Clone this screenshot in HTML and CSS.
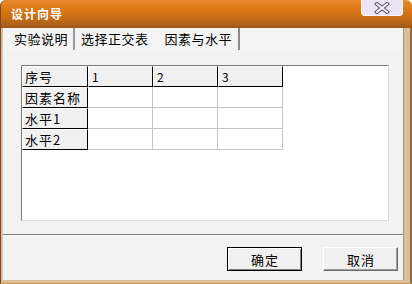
FILE: index.html
```html
<!DOCTYPE html>
<html>
	<head>
		<meta charset="UTF-8">
		<title>设计向导</title>
		<link rel="stylesheet" href="styles.css">
	</head>
	<body>
		<div class="window">
			<div class="titlebar">
				<span class="title">设计向导</span>
				<div class="close">
					<svg width="16" height="12" viewBox="0 0 16 12">
						<path d="M3 2 L13 10 M13 2 L3 10" stroke="#5a4a6a" stroke-width="4" stroke-linecap="square"/>
						<path d="M3 2 L13 10 M13 2 L3 10" stroke="#f4eefa" stroke-width="2" stroke-linecap="square"/>
					</svg>
				</div>
			</div>
			<div class="frame">
				<div class="body">
					<!--标签页-->
					<div class="tabs">
						<div class="tab first">实验说明</div>
						<div class="tab second">选择正交表</div>
						<div class="tab active">因素与水平</div>
					</div>
					<div class="panel">
						<div class="gridbox">
							<table class="grid">
								<tr>
									<th class="c0">序号</th>
									<th>1</th>
									<th>2</th>
									<th>3</th>
								</tr>
								<tr>
									<th class="c0">因素名称</th>
									<td></td><td></td><td></td>
								</tr>
								<tr>
									<th class="c0">水平1</th>
									<td></td><td></td><td></td>
								</tr>
								<tr>
									<th class="c0">水平2</th>
									<td></td><td></td><td></td>
								</tr>
							</table>
						</div>
					</div>
					<div class="buttons">
						<button class="btn default">确定</button>
						<button class="btn">取消</button>
					</div>
				</div>
			</div>
		</div>
	</body>
</html>
```

FILE: styles.css
```css
* {
	margin: 0;
	padding: 0;
	box-sizing: border-box;
}

body {
	width: 412px;
	height: 284px;
	overflow: hidden;
	background: #f2f2f2;
	font-family: "Noto Sans CJK SC", "Liberation Sans", sans-serif;
	font-size: 13px;
	color: #000;
}

.window {
	width: 412px;
	height: 284px;
	display: flex;
	flex-direction: column;
}

.titlebar {
	height: 28px;
	display: flex;
	align-items: flex-start;
	border-radius: 6px 6px 0 0;
	background: linear-gradient(#ec8a2c, #dc7612 35%, #c46a16 70%, #9c5a1a);
	border-left: 1px solid #7a4a18;
}

.title {
	color: #fff;
	font-weight: bold;
	font-size: 12px;
	letter-spacing: 1px;
	line-height: 16px;
	padding: 6px 0 0 10px;
}

.close {
	margin-left: auto;
	margin-right: 9px;
	width: 42px;
	height: 16px;
	background: #ece4f2;
	border: 1px solid #fbf8ff;
	border-top: none;
	border-radius: 0 0 4px 4px;
	display: flex;
	align-items: center;
	justify-content: center;
}

.frame {
	flex: 1;
	display: flex;
	background: #dcbf94;
	border-left: 1px solid #6a4a28;
	padding: 0 6px 3px 2px;
	border-right: 2px solid #8a6a48;
	border-bottom: 1px solid #c89a58;
}

.body {
	flex: 1;
	background: #f2f2f2;
	display: flex;
	flex-direction: column;
	border-right: 1px solid #a09488;
}

.tabs {
	height: 22px;
	display: flex;
	padding-left: 2px;
	background: #f4f4f4;
}

.tab {
	line-height: 22px;
	letter-spacing: 0.5px;
	white-space: nowrap;
}

.tab.first {
	padding: 0 5px 0 9px;
	border-right: 2px solid #9a9a9a;
}

.tab.second {
	padding: 0 7px 0 6px;
}

.tab.active {
	padding: 0 6px 0 9px;
	border-right: 2px solid #8a8a8a;
}

.panel {
	flex: 1;
	padding: 15px 0 0 18px;
	border-bottom: 1px solid #7c7c7c;
}

.gridbox {
	width: 368px;
	height: 156px;
	background: #fff;
	border-top: 1px solid #7a7a7a;
	border-left: 1px solid #7a7a7a;
	border-right: 1px solid #d8d8d8;
	border-bottom: 1px solid #e2e2e2;
}

.grid {
	border-collapse: separate;
	border-spacing: 0;
	font-size: 13px;
}

.grid th,
.grid td {
	height: 21px;
	width: 65px;
	padding: 0 3px;
	text-align: left;
	font-weight: normal;
	white-space: nowrap;
	line-height: 19px;
}

.grid th {
	background: #f0f0f0;
	border-top: 1px solid #fff;
	border-left: 1px solid #fff;
	border-right: 1px solid #000;
	border-bottom: 1px solid #000;
	font-size: 12px;
}

.grid th.c0 {
	width: 66px;
	font-size: 13px;
	letter-spacing: 1px;
	padding-left: 2px;
}

.grid td {
	border-right: 1px solid #c4c4c4;
	border-bottom: 1px solid #c4c4c4;
}

.buttons {
	height: 45px;
	border-top: 1px solid #fff;
	display: flex;
	justify-content: flex-end;
	align-items: flex-start;
	gap: 21px;
	padding: 11px 5px 0 0;
}

.btn {
	width: 75px;
	height: 24px;
	background: #f0f0f0;
	font-family: "Noto Sans CJK SC", "Liberation Sans", sans-serif;
	font-size: 13px;
	letter-spacing: 1px;
	text-indent: 1px;
	border: 1px solid;
	border-color: #fff #6a6a6a #6a6a6a #fff;
	box-shadow: inset -1px -1px 0 #a0a0a0;
}

.btn.default {
	border: 1px solid #000;
	box-shadow: inset 1px 1px 0 #fff, inset -1px -1px 0 #808080;
}
```
